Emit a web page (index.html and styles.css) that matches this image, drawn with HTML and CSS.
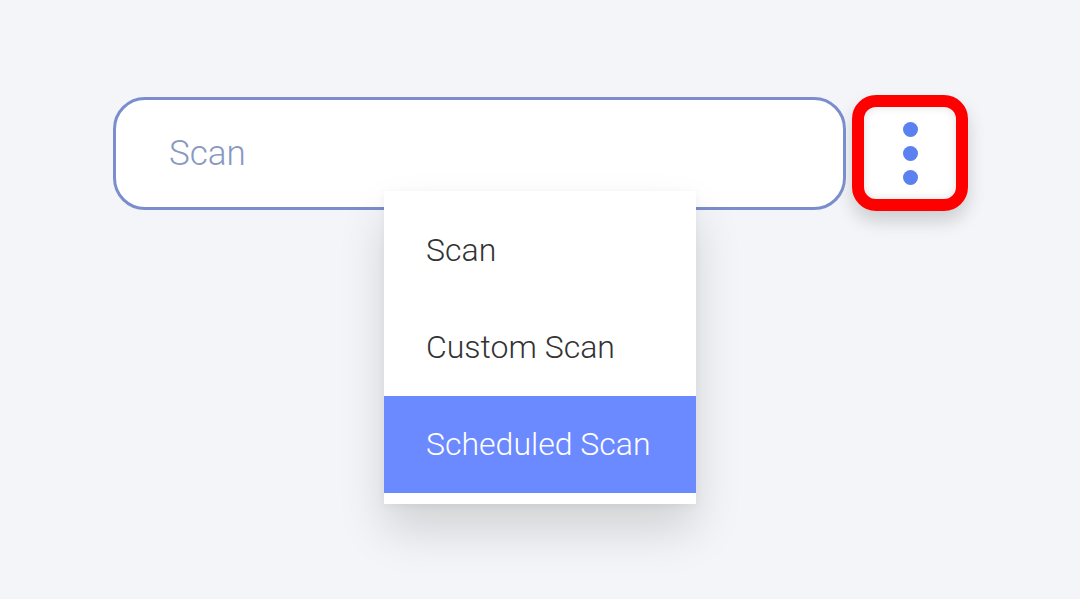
FILE: index.html
```html
<!DOCTYPE html>
<html>
<head>
<meta charset="utf-8">
<link rel="stylesheet" href="styles.css">
</head>
<body>
<div class="page">
  <div class="row">
    <div class="field">
      <div class="input">Scan</div>
      <ul class="menu">
        <li class="item">Scan</li>
        <li class="item">Custom Scan</li>
        <li class="item active">Scheduled Scan</li>
      </ul>
    </div>
    <button class="kebab" aria-label="More">
      <span class="dot"></span><span class="dot"></span><span class="dot"></span>
    </button>
  </div>
</div>
</body>
</html>
```
FILE: styles.css
```css
html, body {
  margin: 0;
  padding: 0;
  height: 100%;
  background: #f3f5f8;
  font-family: Roboto, "Liberation Sans", sans-serif;
}
.page {
  box-sizing: border-box;
  min-height: 599px;
  height: 100%;
  padding: 95px 0 0 113px;
}
.row {
  display: flex;
  align-items: center;
  gap: 6px;
}
.field {
  position: relative;
}
.input {
  box-sizing: border-box;
  width: 733px;
  height: 113px;
  border: 3px solid #7b8dcc;
  border-radius: 32px;
  background: #fff;
  display: flex;
  align-items: center;
  padding-left: 53px;
  font-size: 35px;
  font-weight: 300;
  color: #8799c2;
}
.menu {
  position: absolute;
  left: 271px;
  top: 94px;
  width: 312px;
  margin: 0;
  padding: 11px 0;
  list-style: none;
  background: #fff;
  box-shadow: 0 26px 44px rgba(0, 0, 0, 0.14), 0 2px 8px rgba(0, 0, 0, 0.05);
  z-index: 2;
}
.item {
  height: 97px;
  display: flex;
  align-items: center;
  padding-left: 42px;
  font-size: 32px;
  font-weight: 300;
  color: #333;
}
.item.active {
  background: #6b8aff;
  color: #fff;
}
.kebab {
  box-sizing: border-box;
  width: 116px;
  height: 116px;
  border: 12px solid #ff0000;
  border-radius: 24px;
  background: #fff;
  box-shadow: inset 0 0 10px rgba(0, 0, 0, 0.12), 0 10px 18px rgba(0, 0, 0, 0.16);
  display: flex;
  flex-direction: column;
  align-items: center;
  justify-content: center;
  gap: 9px;
  padding: 0;
}
.dot {
  width: 15px;
  height: 15px;
  border-radius: 50%;
  background: #5b80f0;
}
```
